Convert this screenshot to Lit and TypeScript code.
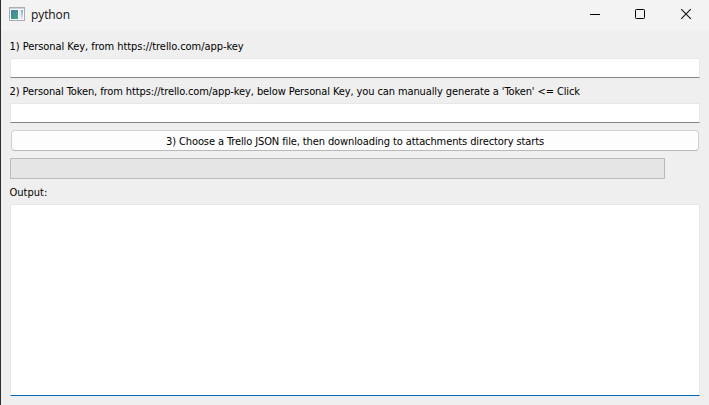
import { LitElement, html, css } from "lit";
import { customElement } from "lit/decorators.js";

@customElement("app-root")
export class AppRoot extends LitElement {
  static styles = css`
    * { box-sizing: border-box; }
    :host {
      box-sizing: border-box;
      display: flex;
      flex-direction: column;
      width: 709px;
      height: 405px;
      overflow: hidden;
      background: #efefef;
      border-left: 1px solid #2d2c2f;
      color: #000;
      font: 11px/14px "DejaVu Sans Condensed", "DejaVu Sans", sans-serif;
      font-stretch: condensed;
    }
    .titlebar {
      display: flex;
      align-items: center;
      height: 30px;
      flex: none;
      background: #f3f3f3;
      padding-left: 8px;
    }
    .icon { margin-top: -2px; }
    .title {
      margin-left: 6px;
      flex: 1;
      font: 12px/16px "Open Sans", "Noto Sans", sans-serif;
      letter-spacing: -0.1px;
      color: #111;
    }
    .controls { display: flex; }
    .control { width: 46px; height: 30px; display: block; }
    .content {
      flex: 1;
      display: flex;
      flex-direction: column;
      padding: 9px;
    }
    .label {
      flex: none;
      height: 14px;
      padding-top: 1px;
      margin-left: -0.5px;
      white-space: nowrap;
    }
    .key { letter-spacing: -0.05px; }
    .token { letter-spacing: -0.105px; }
    .field {
      flex: none;
      height: 20px;
      margin: 5px 0 6px;
      background: #fff;
      border: 1px solid #e7e7e7;
      border-bottom-color: #858585;
    }
    .field.second { margin-bottom: 7px; }
    .button {
      flex: none;
      height: 21px;
      margin: 0 1px;
      padding: 2px 0 0;
      font: inherit;
      font-stretch: condensed;
      letter-spacing: -0.11px;
      color: inherit;
      text-align: center;
      background: #fdfdfd;
      border: 1px solid #d0d0d0;
      border-bottom-color: #b9b9b9;
      border-radius: 4px;
    }
    .progress {
      flex: none;
      width: 655px;
      height: 21px;
      margin: 7px 0 6px;
      background: #e5e5e5;
      border: 1px solid #bababa;
    }
    .output {
      flex: 1;
      margin-top: 5px;
      background: #fff;
      border: 1px solid #e7e7e7;
      border-bottom-color: #0067b9;
    }
  `;

  render() {
    return html`
      <div class="titlebar">
        <svg class="icon" width="16" height="14" viewBox="0 0 16 14">
          <defs>
            <linearGradient id="pane" x1="0" y1="0" x2="1" y2="1">
              <stop offset="0" stop-color="#3f7fb0" />
              <stop offset="1" stop-color="#4aa67c" />
            </linearGradient>
            <linearGradient id="side" x1="0" y1="0" x2="0" y2="1">
              <stop offset="0" stop-color="#7eaec4" />
              <stop offset="1" stop-color="#e8ecec" />
            </linearGradient>
          </defs>
          <rect x="0.5" y="0.5" width="15" height="13" fill="#f7f8fa" stroke="#a9acb3" />
          <rect x="1" y="1" width="14" height="1" fill="#cdd2dc" />
          <rect x="2" y="3" width="7" height="9" fill="url(#pane)" />
          <rect x="10" y="3" width="2" height="9" fill="#e9ebee" />
          <rect x="12" y="3" width="2" height="9" fill="url(#side)" />
        </svg>
        <div class="title">python</div>
        <div class="controls">
          <svg class="control" viewBox="0 0 46 30"><path d="M19 14.5h10" stroke="#000" /></svg>
          <svg class="control" viewBox="0 0 46 30"><rect x="18.5" y="9.5" width="9" height="9" rx="0.8" fill="none" stroke="#000" /></svg>
          <svg class="control" viewBox="0 0 46 30"><path d="M18.2 9.2l9.6 9.6M27.8 9.2l-9.6 9.6" stroke="#111" stroke-width="1.1" /></svg>
        </div>
      </div>
      <div class="content">
        <div class="label key">1) Personal Key, from https://trello.com/app-key</div>
        <div class="field"></div>
        <div class="label token">2) Personal Token, from https://trello.com/app-key, below Personal Key, you can manually generate a 'Token' &lt;= Click</div>
        <div class="field second"></div>
        <button class="button">3) Choose a Trello JSON file, then downloading to attachments directory starts</button>
        <div class="progress"></div>
        <div class="label">Output:</div>
        <div class="output"></div>
      </div>
    `;
  }
}
